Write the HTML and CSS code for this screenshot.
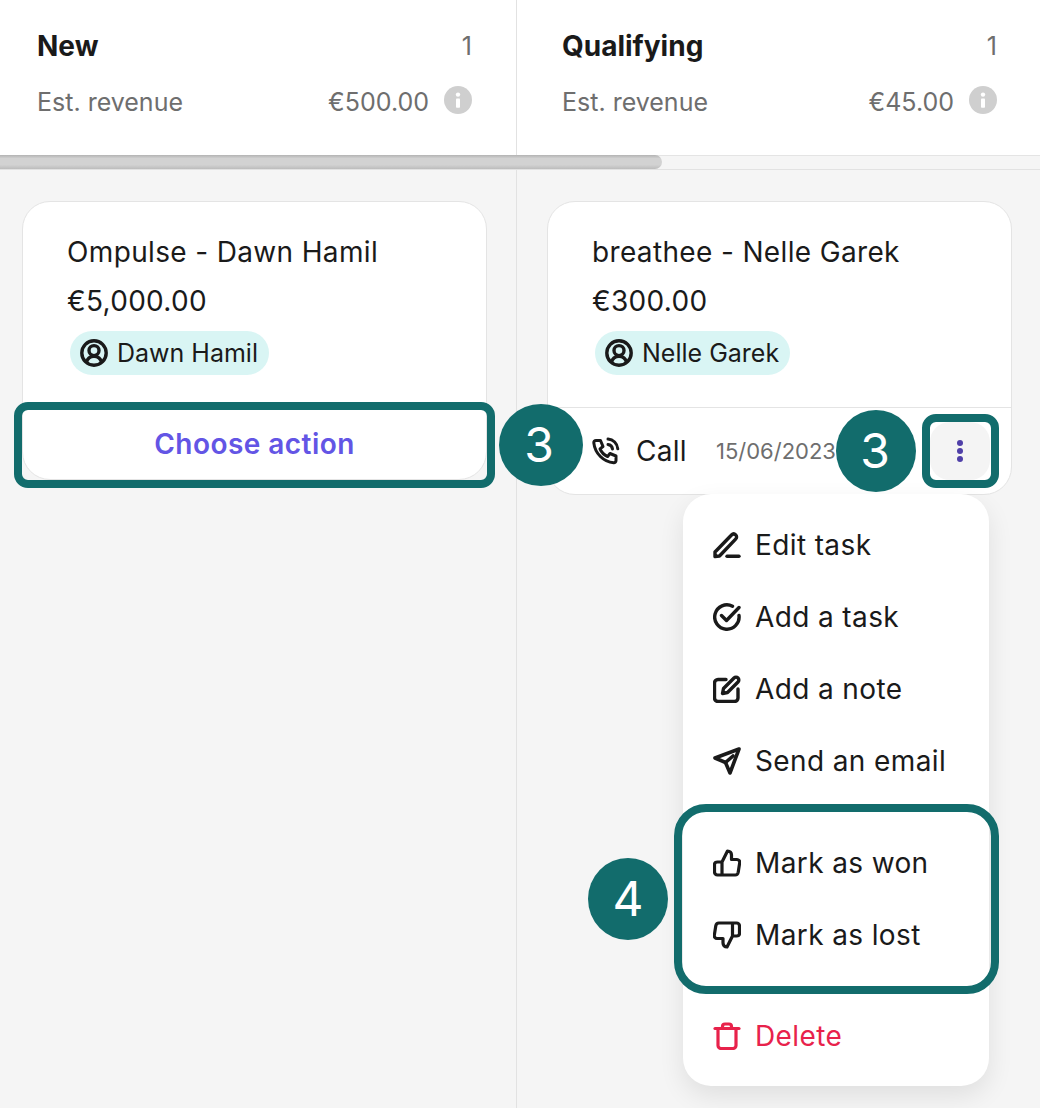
FILE: index.html
```html
<!DOCTYPE html>
<html lang="en">
<head>
<meta charset="utf-8">
<title>Pipeline</title>
<link rel="stylesheet" href="styles.css">
</head>
<body>
<div class="board">
  <section class="col col-new">
    <header class="col-head">
      <div class="head-row"><h2>New</h2><span class="count">1</span></div>
      <div class="head-row rev"><span>Est. revenue</span><span class="rev-val">€500.00 <svg class="info" viewBox="0 0 28 28"><circle cx="14" cy="14" r="14" fill="#cfcfcf"/><circle cx="14" cy="8.6" r="2.2" fill="#fff"/><rect x="12" y="12.4" width="4" height="9.4" rx=".8" fill="#fff"/></svg></span></div>
    </header>
    <div class="track"><div class="thumb"></div></div>
    <div class="lane">
      <article class="card">
        <div class="card-body">
          <div class="title">Ompulse - Dawn Hamil</div>
          <div class="amount">€5,000.00</div>
          <span class="chip"><svg class="chip-ic" viewBox="0 0 28 28" fill="none" stroke="#1a1a1a" stroke-width="3.4"><circle cx="14" cy="14" r="12.2"/><circle cx="14" cy="11.6" r="5"/><path d="M6.4 23.400c1-3.800 3.800-6 7.600-6s6.600 2.200 7.600 6"/></svg>Dawn Hamil</span>
        </div>
        <div class="card-foot choose">Choose action</div>
      </article>
    </div>
  </section>
  <section class="col col-qual">
    <header class="col-head">
      <div class="head-row"><h2>Qualifying</h2><span class="count">1</span></div>
      <div class="head-row rev"><span>Est. revenue</span><span class="rev-val">€45.00 <svg class="info" viewBox="0 0 28 28"><circle cx="14" cy="14" r="14" fill="#cfcfcf"/><circle cx="14" cy="8.6" r="2.2" fill="#fff"/><rect x="12" y="12.4" width="4" height="9.4" rx=".8" fill="#fff"/></svg></span></div>
    </header>
    <div class="track"></div>
    <div class="lane">
      <article class="card">
        <div class="card-body">
          <div class="title">breathee - Nelle Garek</div>
          <div class="amount">€300.00</div>
          <span class="chip"><svg class="chip-ic" viewBox="0 0 28 28" fill="none" stroke="#1a1a1a" stroke-width="3.4"><circle cx="14" cy="14" r="12.2"/><circle cx="14" cy="11.6" r="5"/><path d="M6.4 23.400c1-3.800 3.800-6 7.600-6s6.600 2.200 7.600 6"/></svg>Nelle Garek</span>
        </div>
        <div class="card-foot task">
          <svg class="call-ic" viewBox="0 0 28 28" fill="none" stroke="#1a1a1a" stroke-width="3" stroke-linejoin="round" stroke-linecap="round"><path d="M4 3.500h4.500l2.500 6-3 2.400c1.400 3.400 4.200 6.200 7.600 7.600l2.400-3 6 2.500v4.500c0 1.300-1 2.300-2.300 2.200C11.600 25 3 16.400 1.800 5.800 1.700 4.500 2.700 3.500 4 3.500z"/><path d="M16 2c5.200.4 9.300 4.500 9.800 9.800M16 7.500c2.400.3 4.200 2.100 4.500 4.500"/></svg>
          <span class="call">Call</span>
          <span class="date">15/06/2023</span>
          <button class="more" type="button" aria-label="More"><i></i><i></i><i></i></button>
        </div>
      </article>
    </div>
    <ul class="menu">
      <li><svg viewBox="0 0 28 28" fill="none" stroke="#1a1a1a" stroke-width="3.4" stroke-linecap="round" stroke-linejoin="round"><path d="M2 25.500v-4.500L18.500 4c1.300-1.300 3-1.300 4.200-.1s1.200 2.900-.1 4.200L6.500 25 2 25.500z"/><path d="M14 25.300h12"/></svg>Edit task</li>
      <li><svg viewBox="0 0 28 28" fill="none" stroke="#1a1a1a" stroke-width="3.400" stroke-linecap="round" stroke-linejoin="round"><path d="M26 12.500A12.200 12.200 0 1 1 19.500 3.200"/><path d="M8.500 12.500l5 5L26 4.500"/></svg>Add a task</li>
      <li><svg viewBox="0 0 28 28" fill="none" stroke="#1a1a1a" stroke-width="3.400" stroke-linecap="round" stroke-linejoin="round"><path d="M13 4.500H5A3.500 3.500 0 0 0 1.500 8v15A3.500 3.500 0 0 0 5 26.500h16.500A3.500 3.500 0 0 0 25 23v-9"/><path d="M9.500 18.500l1-5L21 3c1.100-1.100 2.900-1.100 4 0s1.100 2.900 0 4L14.500 17.500l-5 1z"/></svg>Add a note</li>
      <li><svg viewBox="0 0 28 28" fill="none" stroke="#1a1a1a" stroke-width="3.600" stroke-linecap="round" stroke-linejoin="round"><path d="M26 2L2 11l10.500 4.500 4.500 10.500L26 2z"/><path d="M12.500 15.500L20 9"/></svg>Send an email</li>
      <li class="gap-top"><svg viewBox="0 0 28 28" fill="none" stroke="#1a1a1a" stroke-width="3.200" stroke-linecap="round" stroke-linejoin="round"><path d="M9 13L14.500 2c2.500 0 4 1.800 4 4v4.500h5.500c1.700 0 3 1.500 2.700 3.200l-1.500 9.500c-.3 1.500-1.500 2.800-3 2.800H4.500c-1.700 0-3-1.300-3-3v-7.500c0-1.600 1.300-2.500 3-2.500H9V26"/></svg>Mark as won</li>
      <li><svg viewBox="0 0 28 28" fill="none" stroke="#1a1a1a" stroke-width="3.200" stroke-linecap="round" stroke-linejoin="round"><path d="M19.500 15L14 26c-2.500 0-4-1.800-4-4v-4.500H4c-1.700 0-3-1.500-2.700-3.200L2.800 4.800C3.100 3.300 4.300 2 5.800 2h17.700c1.700 0 3 1.300 3 3v7.500c0 1.600-1.300 2.500-3 2.500h-4V2"/></svg>Mark as lost</li>
      <li class="danger"><svg viewBox="0 0 28 28" fill="none" stroke="#e8224b" stroke-width="3.200" stroke-linecap="round" stroke-linejoin="round"><path d="M2 6.500h24"/><path d="M9.500 6V4.500A2.500 2.500 0 0 1 12 2h4a2.500 2.500 0 0 1 2.500 2.500V6"/><path d="M5 7v16.500A3 3 0 0 0 8 26.500h12a3 3 0 0 0 3-3V7"/></svg>Delete</li>
    </ul>
  </section>
  <div class="hl hl-choose"></div>
  <div class="hl hl-more"></div>
  <div class="hl hl-mark"></div>
  <div class="badge b1">3</div>
  <div class="badge b2">3</div>
  <div class="badge b3">4</div>
</div>
</body>
</html>
```

FILE: styles.css
```css
* { box-sizing: border-box; }
html, body { margin: 0; padding: 0; }
body {
  width: 1040px;
  height: 1108px;
  overflow: hidden;
  background: #f5f5f5;
  font-family: Inter, "Liberation Sans", sans-serif;
  color: #1a1a1a;
}
.board {
  position: relative;
  display: flex;
  width: 1040px;
  height: 1108px;
  overflow: hidden;
}
.col {
  position: relative;
  flex: 0 0 auto;
  display: flex;
  flex-direction: column;
  height: 100%;
}
.col-new { width: 517px; border-right: 1px solid #e2e2e2; }
.col-qual { width: 523px; }
.col-head {
  height: 155px;
  background: #fff;
  padding: 28px 44px 0 37px;
  display: flex;
  flex-direction: column;
}
.col-qual .col-head { height: 156px; padding-left: 45px; padding-right: 43px; border-bottom: 1px solid #e4e4e4; }
.head-row {
  display: flex;
  justify-content: space-between;
  align-items: center;
  height: 36px;
}
.rev {
  margin-top: 20px;
  height: 36px;
  font-size: 25px;
  color: #6e6e6e;
}
h2 { margin: 0; font-size: 28px; font-weight: 700; line-height: 36px; color: #1a1a1a; }
.count { font-size: 25px; color: #6e6e6e; }
.rev-val { display: flex; align-items: center; gap: 15px; }
.info { width: 28px; height: 28px; display: block; margin-top: -5px; }
.track {
  height: 15px;
  background: #f5f5f5;
  border-bottom: 1px solid #e2e2e2;
  position: relative;
}
.col-qual .track { height: 14px; }
.thumb {
  position: absolute;
  left: -10px;
  top: 0;
  width: 672px;
  height: 14px;
  border-radius: 7px;
  z-index: 3;
  background: linear-gradient(#b3b3b3, #d2d2d2 25%, #d2d2d2 70%, #bcbcbc);
}
.lane {
  padding: 31px 22px 0;
}
.col-qual .lane { padding: 31px 28px 0 30px; }
.card {
  width: 465px;
  background: #fff;
  border: 1px solid #e4e4e4;
  border-radius: 28px;
}
.card-body {
  height: 205px;
  padding: 28px 44px 0;
}
.title { font-size: 28px; line-height: 44px; letter-spacing: .35px; }
.amount { font-size: 28px; line-height: 44px; margin-top: 5px; letter-spacing: .3px; }
.chip {
  display: inline-flex;
  align-items: center;
  gap: 9px;
  height: 44px;
  margin: 8px 0 0 3px;
  padding: 0 11px 0 10px;
  border-radius: 22px;
  background: #d9f5f4;
  font-size: 25px;
}
.chip-ic { width: 28px; height: 28px; }
.card-foot {
  height: 87px;
  border-top: 1px solid #e4e4e4;
  border-radius: 0 0 28px 28px;
}
.choose {
  display: flex;
  align-items: center;
  justify-content: center;
  padding-top: 2px;
  color: #6355e5;
  font-size: 28px;
  font-weight: 600;
  letter-spacing: .45px;
  border-top: none;
  height: 72px;
}
.task {
  display: flex;
  align-items: center;
  padding: 0 21px 0 44px;
}
.call-ic { width: 28px; height: 28px; margin-right: 16px; }
.call { font-size: 28px; margin-right: 29px; letter-spacing: .3px; }
.date { font-size: 22px; color: #6e6e6e; }
.more {
  margin-left: auto;
  width: 60px;
  height: 58px;
  border: 0;
  padding: 0;
  background: #f4f4f4;
  border-radius: 20px;
  display: flex;
  flex-direction: column;
  align-items: center;
  justify-content: center;
  gap: 2px;
}
.more i { width: 6px; height: 6px; border-radius: 50%; background: #4f3fa8; }
.menu {
  position: absolute;
  left: 166px;
  top: 494px;
  width: 306px;
  height: 592px;
  margin: 0;
  padding: 15px 0 0 30px;
  list-style: none;
  background: #fff;
  border-radius: 28px;
  box-shadow: 0 10px 26px rgba(0,0,0,.09);
  font-size: 28px;
  letter-spacing: .38px;
  z-index: 1;
}
.menu li {
  display: flex;
  align-items: center;
  gap: 14px;
  height: 72px;
}
.menu svg { width: 28px; height: 28px; flex: none; }
.menu .gap-top { margin-top: 30px; }
.menu .danger { margin-top: 29px; color: #e8224b; }
.hl {
  position: absolute;
  border: 8px solid #126c6c;
  z-index: 4;
}
.hl-choose { left: 14px; top: 402px; width: 481px; height: 86px; border-radius: 14px; }
.hl-more { left: 922px; top: 414px; width: 77px; height: 74px; border-radius: 14px; }
.hl-mark { left: 674px; top: 804px; width: 325px; height: 190px; border-radius: 32px; }
.badge {
  position: absolute;
  width: 80px;
  height: 82px;
  border-radius: 50%;
  background: #126c6c;
  color: #fff;
  display: flex;
  align-items: center;
  justify-content: center;
  font-size: 48px;
  line-height: 1;
  z-index: 5;
}
.b1 { left: 499px; top: 404px; width: 84px; padding-right: 4px; }
.b2 { left: 836px; top: 410px; padding-right: 2px; }
.b3 { left: 588px; top: 858px; }
```
